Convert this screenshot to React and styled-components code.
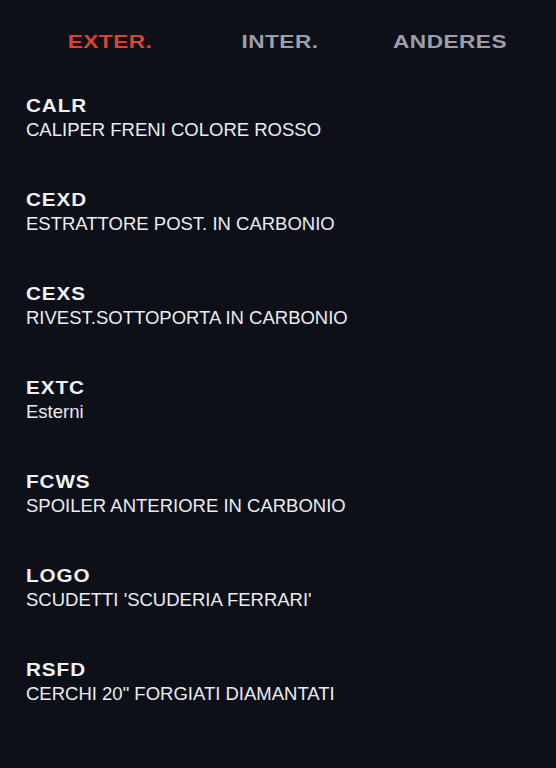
import React from 'react';
import styled, { createGlobalStyle } from 'styled-components';

const GlobalStyle = createGlobalStyle`
  html, body {
    margin: 0;
    padding: 0;
    background-color: #0d1019;
  }
  body {
    font-family: "Liberation Sans", Arial, sans-serif;
    -webkit-font-smoothing: antialiased;
  }
`;

const Page = styled.div`
  min-height: 768px;
  padding: 30px 21px 40px 26px;
  box-sizing: border-box;
  background-color: #0d1019;
`;

const Tabs = styled.nav`
  display: grid;
  grid-template-columns: repeat(3, 170px);
  margin-left: -1px;
  margin-bottom: 40px;
`;

const Tab = styled.button`
  background: none;
  border: none;
  padding: 0;
  font-family: "Liberation Sans", Arial, sans-serif;
  font-weight: 700;
  font-size: 19px;
  line-height: 24px;
  letter-spacing: 0.4px;
  text-align: center;
  transform: scaleX(1.19);
  color: ${(p) => (p.$active ? '#d8452f' : '#9c9fa9')};
  cursor: pointer;
`;

const List = styled.ul`
  list-style: none;
  margin: 0;
  padding: 0;
  display: flex;
  flex-direction: column;
  gap: 46px;
`;

const Item = styled.li`
  display: flex;
  flex-direction: column;
  align-items: flex-start;
`;

/* wide grotesk look: stretch the bold face horizontally */
const Code = styled.span`
  display: inline-block;
  font-weight: 700;
  font-size: 17.5px;
  line-height: 24px;
  letter-spacing: 0.8px;
  transform: scaleX(1.18);
  transform-origin: left center;
  color: #f2f2f4;
`;

const Description = styled.span`
  font-size: 18.5px;
  line-height: 24px;
  color: #ececef;
`;

const tabs = ['EXTER.', 'INTER.', 'ANDERES'];

const options = [
  { code: 'CALR', label: 'CALIPER FRENI COLORE ROSSO' },
  { code: 'CEXD', label: 'ESTRATTORE POST. IN CARBONIO' },
  { code: 'CEXS', label: 'RIVEST.SOTTOPORTA IN CARBONIO' },
  { code: 'EXTC', label: 'Esterni' },
  { code: 'FCWS', label: 'SPOILER ANTERIORE IN CARBONIO' },
  { code: 'LOGO', label: "SCUDETTI 'SCUDERIA FERRARI'" },
  { code: 'RSFD', label: 'CERCHI 20" FORGIATI DIAMANTATI' },
];

export default function App() {
  const [active, setActive] = React.useState(0);

  return (
    <Page>
      <GlobalStyle />
      <Tabs>
        {tabs.map((t, i) => (
          <Tab key={t} $active={i === active} onClick={() => setActive(i)}>
            {t}
          </Tab>
        ))}
      </Tabs>
      <List>
        {options.map((o) => (
          <Item key={o.code}>
            <Code>{o.code}</Code>
            <Description>{o.label}</Description>
          </Item>
        ))}
      </List>
    </Page>
  );
}
